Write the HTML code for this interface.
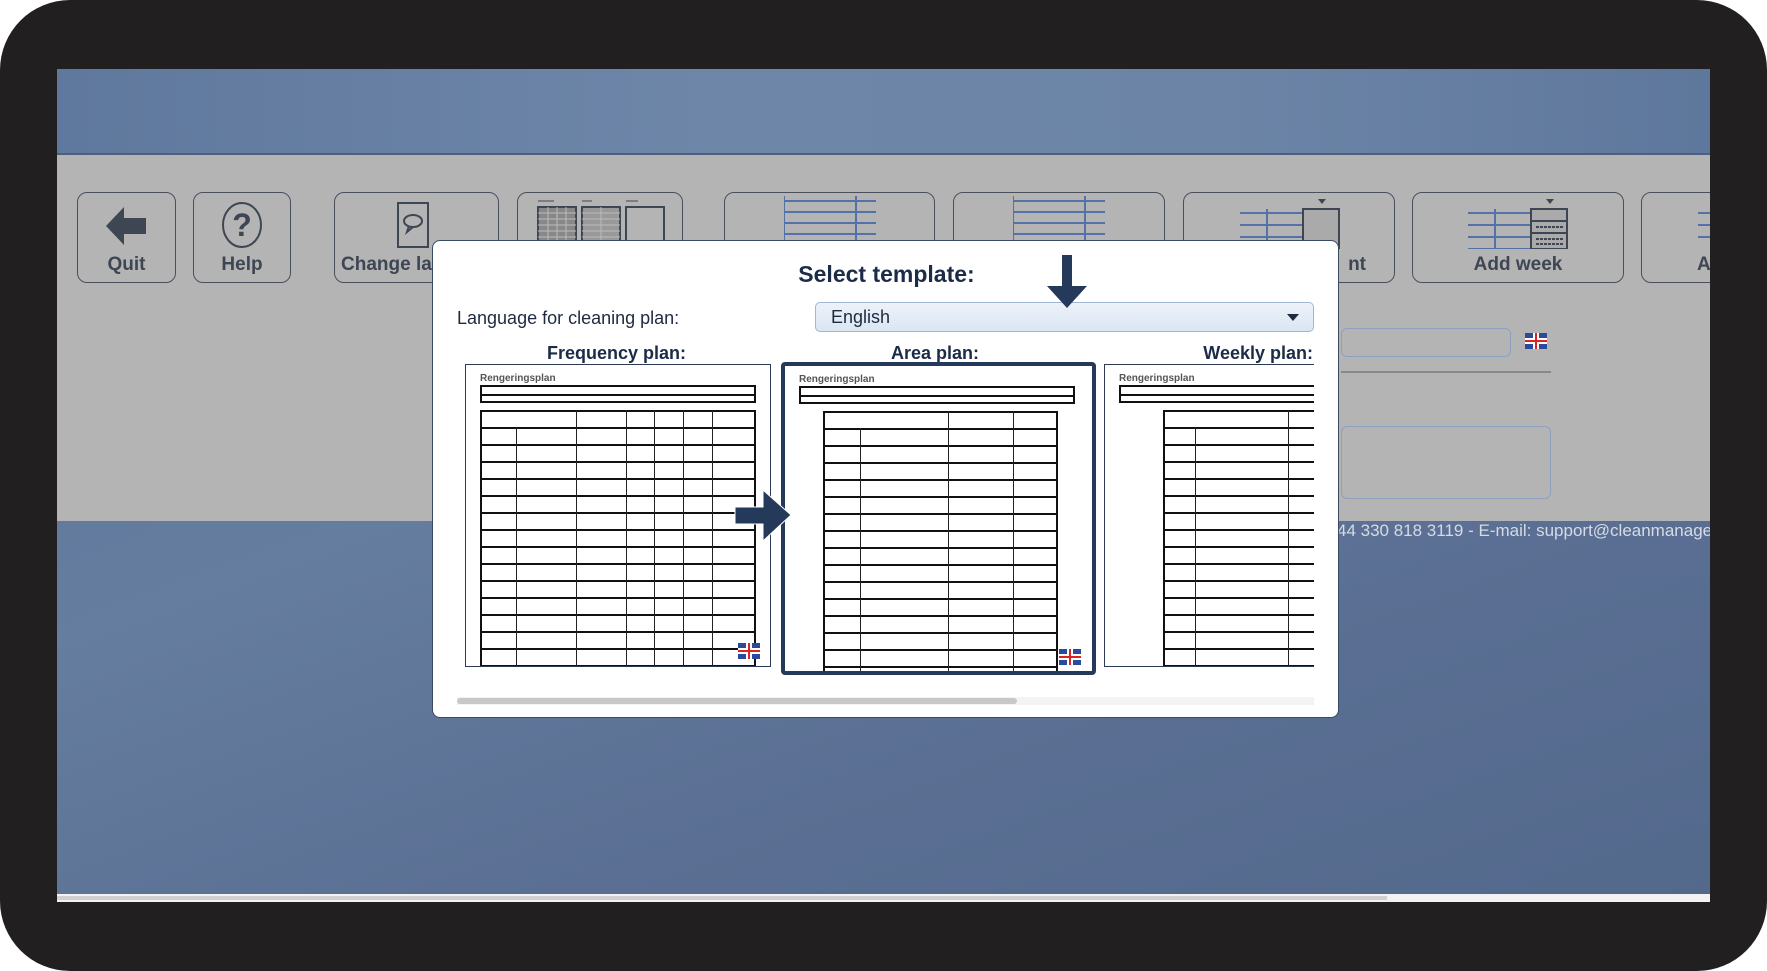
<!DOCTYPE html><html><head><meta charset="utf-8"><style>
*{margin:0;padding:0;box-sizing:border-box}
body{width:1767px;height:971px;background:#fff;position:relative;overflow:hidden;font-family:"Liberation Sans",sans-serif}
.frame{position:absolute;left:0;top:0;width:1767px;height:971px;background:#221f20;border-radius:70px}
.screen{position:absolute;left:57px;top:69px;width:1653px;height:833px;background:linear-gradient(160deg,#5a7196 0%,#657d9f 40%,#5a6f93 70%,#53698c 100%);overflow:hidden}
.top{position:absolute;left:0;top:0;width:100%;height:84px;background:linear-gradient(90deg,#5f789d,#6e87a9 40%,#6c85a7 70%,#5e779c)}
.tool{position:absolute;left:0;top:84px;width:100%;height:368px;background:#b4b4b4;border-top:2px solid #4d5f7c}
.btn{position:absolute;top:37px;height:91px;border:1.5px solid #49505c;border-radius:10px;text-align:center;font-weight:bold;font-size:19px;color:#3e4654;overflow:hidden;white-space:nowrap}
.btn span{position:absolute;left:0;right:0;bottom:6px}
.foot{position:absolute;left:1280px;top:452px;color:#d5dbe5;font-size:17px;white-space:nowrap}
.bar{position:absolute;left:0;bottom:0;width:100%;height:8px;background:#f2f2f2}
.bar i{position:absolute;left:0;top:2px;width:1330px;height:4px;background:#d0d0d0}
.dlg{position:absolute;left:432px;top:240px;width:907px;height:478px;background:#fff;border-radius:8px;border:1px solid #3b4a63;overflow:hidden}
.t{position:absolute;font-weight:bold;color:#1c2b48}
.sel{position:absolute;left:382px;top:61px;width:499px;height:30px;background:linear-gradient(#edf2f9,#dbe6f3);border:1px solid #9fb6d6;border-radius:5px;font-size:18px;color:#1e2a3e;padding:4px 15px}
.pv{position:absolute;top:123px;height:303px;background:#fff;border:1.5px solid #2c3a55;overflow:hidden}
.pv .h{position:absolute;left:14px;top:8px;font-size:10px;font-weight:bold;color:#555}
.pv .b1{position:absolute;left:14px;top:20px;border:2px solid #111;height:18px;background:linear-gradient(#fff 0 7px,#111 7px 9px,#fff 9px)}
.pv .tb{position:absolute;border:2px solid #111;background:repeating-linear-gradient(#fff 0 15px,#111 15px 17px)}
.pv .col{position:absolute;width:1px;background:#222}
.flag{position:absolute;width:22px;height:16px;background:#2a4a9a;overflow:hidden}
.flag:before{content:"";position:absolute;left:0;right:0;top:5px;height:6px;background:#fff}
.flag:after{content:"";position:absolute;left:0;right:0;top:7px;height:2px;background:#d22}
.flag i{position:absolute;top:0;bottom:0;left:8px;width:6px;background:#fff}
.flag i:after{content:"";position:absolute;top:0;bottom:0;left:2px;width:2px;background:#d22}
</style></head><body>
<div class="frame"></div>
<div class="screen">
<div class="top"></div>
<div class="tool">
<div class="btn" style="left:20px;width:99px"><svg width="50" height="46" viewBox="0 0 50 46" style="margin-top:10px"><path d="M4 23 L22 4 V15 H44 V31 H22 V42 Z" fill="#3e4654"/></svg><span>Quit</span></div>
<div class="btn" style="left:136px;width:98px"><svg width="50" height="50" viewBox="0 0 50 50" style="margin-top:7px"><ellipse cx="25" cy="25" rx="19" ry="22" fill="none" stroke="#3e4654" stroke-width="2"/><text x="25" y="36" text-anchor="middle" font-size="32" font-weight="bold" fill="#3e4654" font-family="Liberation Sans">?</text></svg><span>Help</span></div>
<div class="btn" style="left:277px;width:165px"><svg width="40" height="50" viewBox="0 0 40 50" style="position:absolute;left:60px;top:8px"><rect x="3" y="2" width="30" height="44" fill="none" stroke="#3e4654" stroke-width="2"/><ellipse cx="18" cy="20" rx="9" ry="6" fill="none" stroke="#3e4654" stroke-width="2"/><path d="M14 25l-2 6 6-5" fill="none" stroke="#3e4654" stroke-width="2"/></svg><span style="text-align:left;padding-left:6px">Change language</span></div>
<div class="btn" style="left:460px;width:166px"><svg width="130" height="48" style="position:absolute;left:18px;top:4px"><g fill="none" stroke="#3e4654" stroke-width="2"><rect x="2" y="10" width="38" height="38" fill="#888"/><rect x="46" y="10" width="38" height="38" fill="#999"/><rect x="90" y="10" width="38" height="38"/></g><g stroke="#bbb"><path d="M2 16H40M2 22H40M2 28H40M2 34H40M2 40H40M46 16H84M46 22H84M46 28H84M46 34H84M46 40H84M12 10V48M21 10V48M30 10V48M65 10V48"/></g><path d="M2 4h16M46 4h10M90 4h12" stroke="#3e4654"/></svg></div>
<div class="btn" style="left:667px;width:211px"><svg width="92" height="45" style="margin-top:3px"><g stroke="#5572a8" stroke-width="2"><path d="M0 5H92M0 16H92M0 27H92M0 38H92M0 0V45M72 0V45"/></g></svg></div>
<div class="btn" style="left:896px;width:212px"><svg width="92" height="45" style="margin-top:3px"><g stroke="#5572a8" stroke-width="2"><path d="M0 5H92M0 16H92M0 27H92M0 38H92M0 0V45M72 0V45"/></g></svg></div>
<div class="btn" style="left:1126px;width:212px"><svg width="100" height="52" style="position:absolute;left:56px;top:4px"><g stroke="#5572a8" stroke-width="2"><path d="M0 16H100M0 28H100M0 40H100M0 52H100M27 12V52"/></g><rect x="63" y="12" width="36" height="40" fill="#aaa" stroke="#3e4654" stroke-width="2"/><path d="M78 2h8l-4 5z" fill="#3e4654"/></svg><span style="text-align:right;padding-right:28px">nt</span></div>
<div class="btn" style="left:1355px;width:212px"><svg width="100" height="52" style="margin-top:4px"><g stroke="#5572a8" stroke-width="2"><path d="M0 16H100M0 28H100M0 40H100M0 52H100M27 12V52"/></g><rect x="63" y="12" width="36" height="40" fill="#aaa" stroke="#3e4654" stroke-width="2"/><path d="M63 24H99M63 36H99" stroke="#3e4654" stroke-width="2"/><path d="M68 30H95M68 42H95M68 47H95" stroke="#3e4654" stroke-width="2" stroke-dasharray="3 1"/><path d="M78 2h8l-4 5z" fill="#3e4654"/></svg><span>Add week</span></div>
<div class="btn" style="left:1584px;width:120px"><svg width="20" height="52" style="position:absolute;left:56px;top:4px"><g stroke="#5572a8" stroke-width="2"><path d="M0 16H20M0 28H20M0 40H20"/></g></svg><span style="text-align:left;padding-left:55px">A</span></div>
<div style="position:absolute;left:1284px;top:173px;width:170px;height:29px;border:1px solid #8da0c0;border-radius:6px"></div>
<div class="flag" style="left:1468px;top:178px"><i></i></div>
<div style="position:absolute;left:1284px;top:216px;width:210px;height:2px;background:#888"></div>
<div style="position:absolute;left:1284px;top:271px;width:210px;height:73px;border:1px solid #8da0c0;border-radius:6px"></div>
</div>
<div class="foot">44 330 818 3119 - E-mail: support@cleanmanager.com</div>
<div class="bar"><i></i></div>
</div>
<div class="dlg">
<div class="t" style="left:0;width:907px;text-align:center;top:20px;font-size:23px">Select template:</div>
<div style="position:absolute;left:24px;top:67px;font-size:18px;color:#1e2a3e">Language for cleaning plan:</div>
<div class="sel">English<svg width="12" height="8" style="position:absolute;right:14px;top:11px"><path d="M0 0h12L6 7z" fill="#1e2a3e"/></svg></div>
<div class="t" style="left:114px;top:102px;font-size:18px">Frequency plan:</div>
<div class="t" style="left:458px;top:102px;font-size:18px">Area plan:</div>
<div class="t" style="left:690px;width:190px;text-align:right;top:102px;font-size:18px;border-bottom:2px solid #2c3a55">Weekly plan:</div>
<div class="pv" style="left:32px;width:306px"><div class="h">Rengeringsplan</div><div class="b1" style="width:276px"></div><div class="tb" style="left:14px;top:45px;width:276px;height:270px"></div><div class="col" style="left:110px;top:45px;height:270px"></div><div class="col" style="left:160px;top:45px;height:270px"></div><div class="col" style="left:188px;top:45px;height:270px"></div><div class="col" style="left:217px;top:45px;height:270px"></div><div class="col" style="left:246px;top:45px;height:270px"></div><div class="col" style="left:50px;top:62px;height:260px"></div><div class="flag" style="left:272px;top:278px"><i></i></div></div>
<div class="pv" style="left:348px;width:315px;top:121px;height:313px;border:4px solid #253a5a;border-radius:4px"><div class="h">Rengeringsplan</div><div class="b1" style="width:276px"></div><div class="tb" style="left:38px;top:45px;width:235px;height:270px"></div><div class="col" style="left:75px;top:62px;height:260px"></div><div class="col" style="left:163px;top:45px;height:270px"></div><div class="col" style="left:228px;top:45px;height:270px"></div><div class="flag" style="left:274px;top:283px"><i></i></div></div>
<div class="pv" style="left:671px;width:210px;border-right:none"><div class="h">Rengeringsplan</div><div class="b1" style="width:200px"></div><div class="tb" style="left:58px;top:45px;width:160px;height:270px"></div><div class="col" style="left:90px;top:62px;height:260px"></div><div class="col" style="left:183px;top:45px;height:270px"></div></div>
<div style="position:absolute;left:24px;top:456px;width:857px;height:8px;background:#f3f3f3"><div style="width:560px;height:6px;margin-top:1px;background:#c8c8c8;border-radius:3px"></div></div>
</div>
<svg width="60" height="60" style="position:absolute;left:1039px;top:252px"><path d="M23 3H33V34H48L28 56L8 34H23Z" fill="#253a5a"/></svg>
<svg width="60" height="60" style="position:absolute;left:733px;top:486px"><path d="M2 21H30V4L58 29L30 55V38H2Z" fill="#253a5a" stroke="#fff" stroke-width="1"/></svg>
</body></html>
